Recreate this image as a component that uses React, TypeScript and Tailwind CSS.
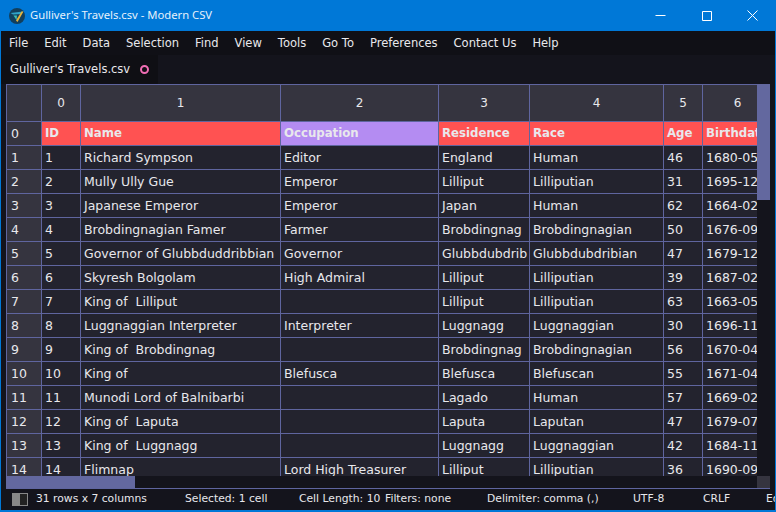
const menus = ['File', 'Edit', 'Data', 'Selection', 'Find', 'View', 'Tools', 'Go To', 'Preferences', 'Contact Us', 'Help'];

const widths = [39, 200, 158, 91, 134, 39, 70];

const header = ['ID', 'Name', 'Occupation', 'Residence', 'Race', 'Age', 'Birthdate'];

const rows = [
  ['1', 'Richard Sympson', 'Editor', 'England', 'Human', '46', '1680-05-04'],
  ['2', 'Mully Ully Gue', 'Emperor', 'Lilliput', 'Lilliputian', '31', '1695-12-01'],
  ['3', 'Japanese Emperor', 'Emperor', 'Japan', 'Human', '62', '1664-02-11'],
  ['4', 'Brobdingnagian Famer', 'Farmer', 'Brobdingnag', 'Brobdingnagian', '50', '1676-09-21'],
  ['5', 'Governor of Glubbduddribbian', 'Governor', 'Glubbdubdrib', 'Glubbdubdribian', '47', '1679-12-06'],
  ['6', 'Skyresh Bolgolam', 'High Admiral', 'Lilliput', 'Lilliputian', '39', '1687-02-14'],
  ['7', 'King of  Lilliput', '', 'Lilliput', 'Lilliputian', '63', '1663-05-30'],
  ['8', 'Luggnaggian Interpreter', 'Interpreter', 'Luggnagg', 'Luggnaggian', '30', '1696-11-08'],
  ['9', 'King of  Brobdingnag', '', 'Brobdingnag', 'Brobdingnagian', '56', '1670-04-17'],
  ['10', 'King of', 'Blefusca', 'Blefusca', 'Blefuscan', '55', '1671-04-25'],
  ['11', 'Munodi Lord of Balnibarbi', '', 'Lagado', 'Human', '57', '1669-02-03'],
  ['12', 'King of  Laputa', '', 'Laputa', 'Laputan', '47', '1679-07-19'],
  ['13', 'King of  Luggnagg', '', 'Luggnagg', 'Luggnaggian', '42', '1684-11-02'],
  ['14', 'Flimnap', 'Lord High Treasurer', 'Lilliput', 'Lilliputian', '36', '1690-09-12'],
];

function AppLogo() {
  return (
    <svg width="16" height="16" viewBox="0 0 16 16">
      <circle cx="8" cy="8" r="8" fill="#123f5c" />
      <path d="M1.5 5 L14 3.5 L12.5 6 L4 6.5 Z" fill="#2fa3c7" />
      <path d="M7 12.5 L12.5 3.5 L14.5 3.5 L8.5 14 Z" fill="#e8b23a" />
      <path d="M4.5 7.5 L8 7.5 L7.5 12 Z" fill="#3cc2b0" />
    </svg>
  );
}

export default function App() {
  return (
    <div className="w-[776px] h-[512px] flex flex-col overflow-hidden bg-[#0078d7] font-['DejaVu_Sans',sans-serif] text-[11.5px] text-[#e8e8ec]">
      <div className="h-[31px] shrink-0 flex items-center pl-[9px] text-[#e6f1fb]">
        <AppLogo />
        <span className="ml-[5px] font-['Noto_Sans',sans-serif] text-[11.25px]">Gulliver's Travels.csv - Modern CSV</span>
        <div className="ml-auto flex items-center">
          <svg width="11" height="11" viewBox="0 0 11 11" className="mr-[35px]">
            <path d="M0.5 5.5 H10.5" stroke="#fff" fill="none" />
          </svg>
          <svg width="11" height="11" viewBox="0 0 11 11" className="mr-[35px]">
            <path d="M1.5 1.5 H10.5 V10.5 H1.5 Z" stroke="#fff" fill="none" />
          </svg>
          <svg width="11" height="11" viewBox="0 0 11 11" className="mr-[18px]">
            <path d="M0.5 0.5 L10.5 10.5 M10.5 0.5 L0.5 10.5" stroke="#fff" fill="none" />
          </svg>
        </div>
      </div>

      <div className="flex-1 min-h-0 mx-px mb-[2px] flex flex-col bg-[#14141c]">
        <div className="h-[24px] shrink-0 flex items-center gap-[16px] pl-[8px] pt-px bg-[#101016]">
          {menus.map((m) => (
            <span key={m}>{m}</span>
          ))}
        </div>

        <div className="h-[29px] shrink-0 flex bg-[#14141c]">
          <div className="w-[157px] flex items-center pl-[9px] bg-[#0f0f14]">
            <span>Gulliver's Travels.csv</span>
            <span className="ml-[10px] w-[9px] h-[9px] rounded-full border-2 border-[#f06eb4]" />
          </div>
        </div>

        <div className="flex-1 min-h-0 ml-[5px] mr-[5px] flex flex-col">
          <div className="flex-1 min-h-0 flex">
            <div className="flex-1 min-w-0 overflow-hidden">
              <table className="table-fixed border-collapse w-[696px] text-[12.5px]">
                <colgroup>
                  <col className="w-[35px]" />
                  {widths.map((w, i) => (
                    <col key={i} style={{ width: w }} />
                  ))}
                </colgroup>
                <thead>
                  <tr className="h-[37px] bg-[#35343f] text-[12px]">
                    <th className="border border-[#5f659f] font-normal" />
                    {widths.map((_, i) => (
                      <th key={i} className="border border-[#5f659f] font-normal text-center">
                        {i}
                      </th>
                    ))}
                  </tr>
                </thead>
                <tbody>
                  <tr className="h-[24px]">
                    <td className="border border-[#5f659f] bg-[#35343f] pl-[4px] pt-px">0</td>
                    {header.map((h) => (
                      <td
                        key={h}
                        className={`border border-[#5f659f] pl-[3px] pt-px text-[11.75px] font-bold whitespace-nowrap overflow-hidden ${
                          h === 'Occupation' ? 'bg-[#b48cf2]' : 'bg-[#ff5252]'
                        }`}
                      >
                        {h}
                      </td>
                    ))}
                  </tr>
                  {rows.map((r, i) => (
                    <tr key={i} className="h-[24px]">
                      <td className="border border-[#5f659f] bg-[#35343f] pl-[4px] pt-px">{i + 1}</td>
                      {r.map((c, j) => (
                        <td
                          key={j}
                          className="border border-[#5f659f] bg-[#23232e] pl-[3px] pt-px whitespace-pre overflow-hidden"
                        >
                          {c}
                        </td>
                      ))}
                    </tr>
                  ))}
                </tbody>
              </table>
            </div>
            <div className="w-[13px] shrink-0 bg-[#14141c]">
              <div className="h-[116px] bg-[#63689f]" />
            </div>
          </div>
          <div className="h-[12px] shrink-0 flex bg-[#14141c]">
            <div className="w-[129px] bg-[#63689f]" />
            <div className="ml-auto w-[13px] bg-[#35343f]" />
          </div>
          <div className="h-px shrink-0 bg-[#5f659f]" />
        </div>

        <div className="h-[21px] shrink-0 flex items-center pl-[11px] text-[10.75px] whitespace-nowrap overflow-hidden bg-[#14141c]">
          <span className="shrink-0 w-[16px] h-[13px] border border-[#888] bg-[linear-gradient(90deg,#888_50%,#222_50%)]" />
          <span className="shrink-0 ml-[8px] w-[149px]">31 rows x 7 columns</span>
          <span className="shrink-0 w-[114px]">Selected: 1 cell</span>
          <span className="shrink-0 w-[86px]">Cell Length: 10</span>
          <span className="shrink-0 w-[102px]">Filters: none</span>
          <span className="shrink-0 w-[146px]">Delimiter: comma (,)</span>
          <span className="shrink-0 w-[70px]">UTF-8</span>
          <span className="shrink-0 w-[63px]">CRLF</span>
          <span className="shrink-0">Edit</span>
        </div>
      </div>
    </div>
  );
}
